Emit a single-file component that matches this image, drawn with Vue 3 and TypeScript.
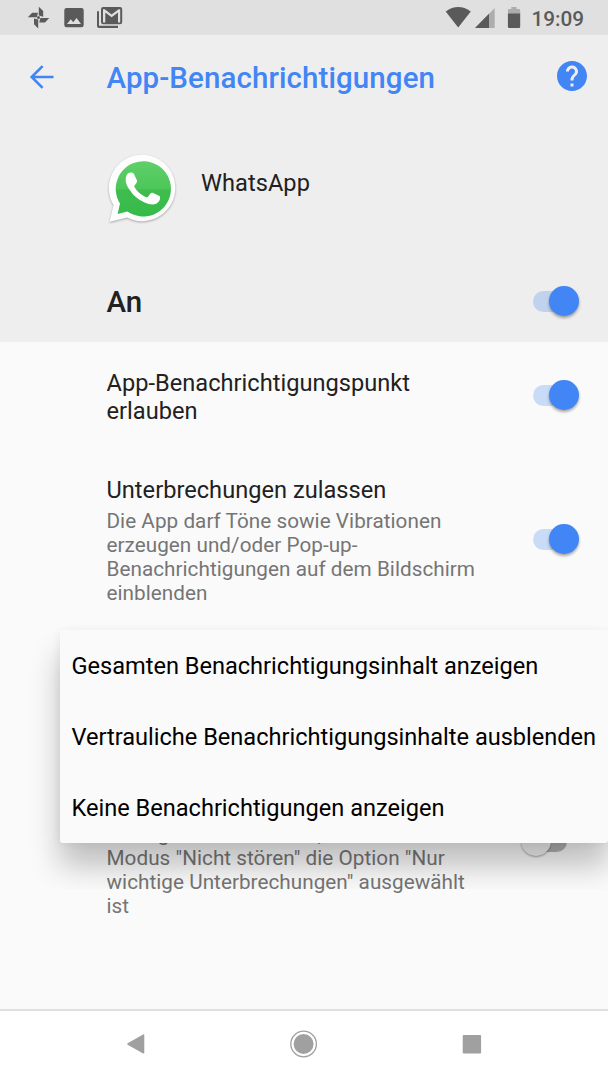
<script setup lang="ts">
interface Setting { id: string; title: string; lines: string[]; on: boolean }
const settings: Setting[] = [
  { id: 'dot', title: 'App-Benachrichtigungspunkt erlauben', lines: [], on: true },
  {
    id: 'interrupt',
    title: 'Unterbrechungen zulassen',
    lines: ['Die App darf Töne sowie Vibrationen', 'erzeugen und/oder Pop-up-', 'Benachrichtigungen auf dem Bildschirm', 'einblenden'],
    on: true,
  },
  {
    id: 'dnd',
    title: '',
    lines: ['Anzeige auch zulassen, wenn im', 'Modus "Nicht stören" die Option "Nur', 'wichtige Unterbrechungen" ausgewählt', 'ist'],
    on: false,
  },
]
const options: string[] = [
  'Gesamten Benachrichtigungsinhalt anzeigen',
  'Vertrauliche Benachrichtigungsinhalte ausblenden',
  'Keine Benachrichtigungen anzeigen',
]
</script>

<template>
  <div class="screen">
    <div class="status">
      <svg class="status-icons" width="608" height="36" viewBox="0 0 608 36">
        <g fill="#5a5a5a">
          <path d="M38.8 6.8 43.2 11V16.8L38.8 15.4ZM49.2 18 45 22.6H39.2L40.4 18ZM38.2 28.4 34 24.2V18.6L38.2 19.6ZM27.8 17.2 32.2 12.8H38L36.8 17.2Z" />
          <circle cx="38.5" cy="17.6" r="1.5" />
          <path fill-rule="evenodd" d="M66.5 8H81.5Q83.7 8 83.7 10.2V25Q83.7 27.2 81.5 27.2H66.5Q64.3 27.2 64.3 25V10.2Q64.3 8 66.5 8ZM67 24H81L76.6 18 73.2 22.2 70.8 19.3Z" />
          <path d="M97 11.3H99V25.8H118V28H99Q97 28 97 26Z" />
          <path fill-rule="evenodd" d="M103.2 7H120Q122.2 7 122.2 9.2V22Q122.2 24.2 120 24.2H103.2Q101 24.2 101 22V9.2Q101 7 103.2 7ZM103 9.2V22.4H105.3V12.4L111.6 17.3 118 12.4V22.4H120.2V9.2H118.6L111.6 14.5 104.7 9.2Z" />
          <path d="M445.7 11.4Q458.2 2.8 470.8 11.4L458.2 27.4Z" />
        </g>
        <path fill="#adadad" d="M494.7 8V28H475Z" />
        <path fill="#5a5a5a" d="M489 13.7V28H475Z" />
        <path fill="#adadad" d="M511.3 7H516.6V9H519Q520.2 9 520.2 10.2V14H507.9V10.2Q507.9 9 509.1 9H511.3Z" />
        <path fill="#5a5a5a" d="M507.9 13.5H520.2V26.8Q520.2 28 519 28H509.1Q507.9 28 507.9 26.8Z" />
      </svg>
      <span class="clock">19:09</span>
    </div>

    <header class="bar">
      <svg class="back" width="26" height="26" viewBox="0 0 26 26" fill="none" stroke="#4285f4" stroke-width="2.6">
        <path d="M24.5 13H3M13.6 2.1 2.7 13 13.6 23.9" />
      </svg>
      <h1>App-Benachrichtigungen</h1>
      <svg class="help" width="30" height="30" viewBox="2 2 20 20">
        <path fill="#4285f4" d="M12 2C6.48 2 2 6.48 2 12s4.48 10 10 10 10-4.48 10-10S17.52 2 12 2zm1 17h-2v-2h2v2zm2.07-7.75l-.9.92C13.45 12.9 13 13.5 13 15h-2v-.5c0-1.1.45-2.1 1.17-2.83l1.24-1.26c.37-.36.59-.86.59-1.41 0-1.1-.9-2-2-2s-2 .9-2 2H8c0-2.21 1.79-4 4-4s4 1.79 4 4c0 .88-.36 1.68-.93 2.25z" />
      </svg>
    </header>

    <section class="app">
      <svg class="logo" width="76" height="76" viewBox="0 0 76 76">
        <defs>
          <linearGradient id="wa" x1="0" y1="0" x2="0" y2="1">
            <stop offset="0" stop-color="#5fd069" />
            <stop offset=".5" stop-color="#4cc659" />
            <stop offset=".52" stop-color="#3fbd4e" />
            <stop offset="1" stop-color="#35bb49" />
          </linearGradient>
        </defs>
        <path class="bubble" fill="#fdfdfd" d="M4.6 69.8 8.6 53.1A33.2 33.2 0 1 1 22.1 65.6Z" />
        <path fill="url(#wa)" d="M12.6 61.9 15 51.6A27.6 27.6 0 1 1 22.4 59.4Z" />
        <path fill="#fff" d="M23 21.3Q24.4 20.4 26.6 20.6 28.5 20.6 29.2 22.4L32 28.6Q32.3 29.9 31.4 31L29.6 33.4Q28.9 34.3 29.5 35.3 33.7 42.1 41 45.2 42.2 45.6 43 44.7L45.7 41.3Q46.4 40.3 47.7 40.8L54.3 44Q55.4 44.5 55.1 45.8 55 49.7 51.6 51.4 46.9 53.7 40.1 50.8 30.2 46.9 24 37.1C19.5 30.5 20.1 24.3 23 21.3Z" />
      </svg>
      <span class="app-name">WhatsApp</span>
    </section>

    <section class="master">
      <span class="on-label">An</span>
      <div class="switch on"><i class="track"></i><i class="thumb"></i></div>
    </section>

    <main class="list">
      <div v-for="s in settings" :key="s.id" class="row" :class="s.id">
        <div class="copy">
          <div v-if="s.title" class="title">{{ s.title }}</div>
          <div v-for="line in s.lines" :key="line" class="summary">{{ line }}</div>
        </div>
        <div class="switch" :class="{ on: s.on }"><i class="track"></i><i class="thumb"></i></div>
      </div>
      <div class="shade"><div class="cast"></div></div>
      <div class="menu">
        <div v-for="o in options" :key="o" class="option">{{ o }}</div>
      </div>
    </main>

    <nav class="nav">
      <svg width="20" height="22" viewBox="0 0 20 22"><path fill="#a0a0a0" stroke="#a0a0a0" stroke-width="1.6" stroke-linejoin="round" d="M2 11 17.5 2.2V19.8Z" /></svg>
      <svg width="28" height="28" viewBox="0 0 28 28"><circle cx="13.6" cy="14" r="12.8" fill="none" stroke="#a0a0a0" stroke-width="1.3" /><circle cx="13.6" cy="14" r="10" fill="#a0a0a0" /></svg>
      <svg width="20" height="20" viewBox="0 0 20 20"><rect x=".7" y="1" width="18.4" height="18.4" rx="1" fill="#a0a0a0" /></svg>
    </nav>
  </div>
</template>

<style>
body { margin: 0; }
</style>

<style scoped>
.screen { width: 608px; height: 1080px; overflow: hidden; display: flex; flex-direction: column; background: #fafafa; color: #212121; font-family: Roboto, "Liberation Sans", sans-serif; }
.status { position: relative; height: 35px; flex: none; background: #e0e0e0; }
.status-icons { position: absolute; inset: 0 auto auto 0; }
.clock { position: absolute; left: 531.5px; top: 7px; font-size: 20.7px; line-height: 24px; font-weight: 500; color: #5a5a5a; }
.bar { height: 83px; flex: none; background: #eee; display: flex; align-items: center; padding: 0 21px 0 29px; box-sizing: border-box; }
.back { width: 26px; flex: none; }
.help { flex: none; margin-top: -1px; }
h1 { margin: 2px 0 0 51.5px; flex: 1; font-size: 29.5px; line-height: 36px; font-weight: 500; letter-spacing: .09px; color: #4285f4; white-space: nowrap; }
.app { height: 144px; flex: none; background: #eee; display: flex; padding: 34px 0 0 104.5px; box-sizing: border-box; }
.logo { flex: none; }
.bubble { filter: drop-shadow(0 1px 1px rgba(0, 0, 0, .3)); }
.app-name { margin: 17px 0 0 20.5px; font-size: 23.6px; line-height: 28px; letter-spacing: .05px; }
.master { height: 80px; flex: none; background: #eee; display: flex; justify-content: space-between; align-items: center; padding: 0 28.5px 1px 106.5px; box-sizing: border-box; }
.on-label { margin-top: 1px; font-size: 29.5px; line-height: 36px; font-weight: 500; }
.switch { position: relative; width: 48px; height: 30px; flex: none; }
.master .switch { margin-top: -2px; }
.track { position: absolute; left: 1px; top: 5px; width: 45px; height: 21px; border-radius: 11px; background: #b2b2b2; }
.thumb { position: absolute; left: -11px; top: 0; width: 30px; height: 30px; border-radius: 50%; background: #f2f2f2; box-shadow: 0 1px 2px rgba(0, 0, 0, .35); }
.on .track { background: rgba(66, 133, 244, .26); }
.on .thumb { left: 17px; background: #4285f4; box-shadow: 0 2px 3px rgba(0, 0, 0, .35); }
.switch:not(.on) .track { left: -10px; }
.list { position: relative; flex: 1; }
.row { display: flex; justify-content: space-between; align-items: center; padding: 0 28.5px 0 106.5px; }
.copy { width: 380px; white-space: nowrap; }
.title { font-size: 23.6px; line-height: 27.6px; letter-spacing: .02px; white-space: normal; }
.summary { font-size: 20.7px; line-height: 24.15px; letter-spacing: .04px; color: #757575; }
.dot { height: 108px; }
.dot .copy { padding-top: 3px; }
.dot .switch, .interrupt .switch { margin-top: -2px; }
.interrupt { height: 180px; }
.interrupt .copy { padding-top: 3px; }
.interrupt .title { margin-bottom: 4px; }
.dnd { margin-top: 191.5px; }
.dnd .switch { align-self: flex-start; margin-top: 4px; }
.shade { position: absolute; left: 0; top: 260px; width: 608px; height: 287px; overflow: hidden; }
.cast { position: absolute; left: 60px; top: 28px; width: 548px; height: 211px; border-radius: 3px; box-shadow: 0 25px 30px rgba(0, 0, 0, .24), 0 2px 10px rgba(0, 0, 0, .07); }
.menu { position: absolute; left: 59.5px; top: 287.5px; width: 548px; height: 213px; border-radius: 3px; background: #fafafa; color: #000; }
.option { height: 71px; box-sizing: border-box; display: flex; align-items: center; padding: 2px 0 0 12px; font-size: 23.6px; letter-spacing: -.015px; white-space: nowrap; }
.nav { height: 66px; padding: 0 126px 3px; flex: none; border-top: 2px solid #e0e0e0; background: #fff; display: flex; justify-content: space-between; align-items: center; }
</style>
